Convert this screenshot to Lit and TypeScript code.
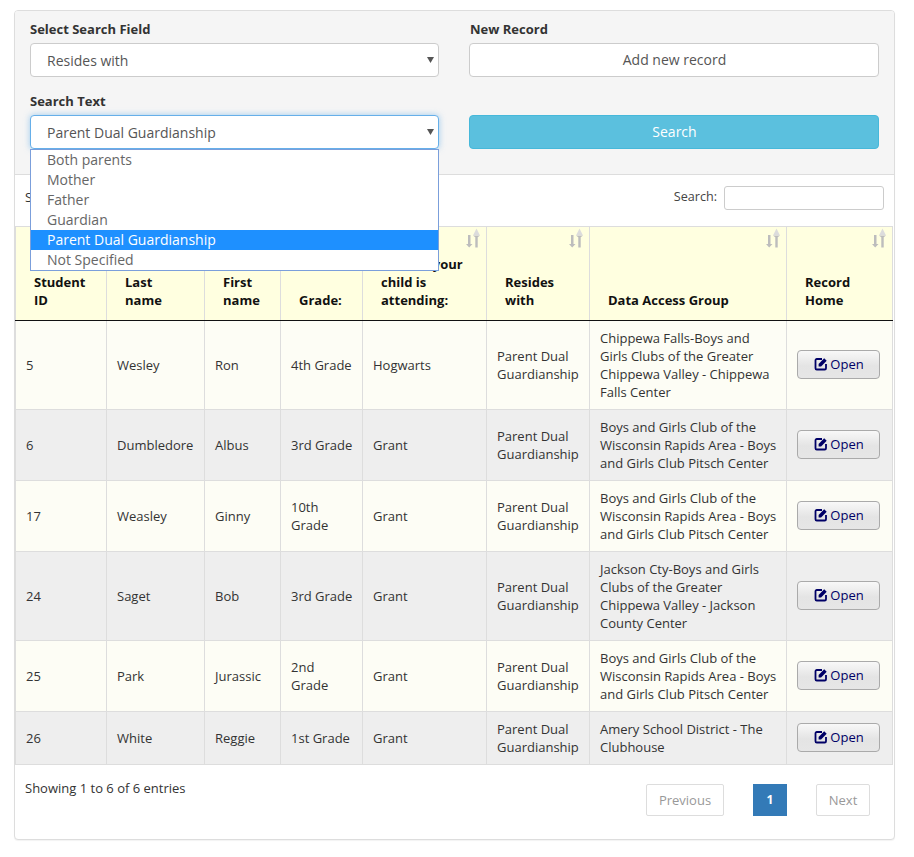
import { LitElement, html, css, svg } from "lit";
import { customElement } from "lit/decorators.js";

const PDG = "Parent Dual\nGuardianship";
const BG = "Boys and Girls Club of the\nWisconsin Rapids Area - Boys\nand Girls Club Pitsch Center";
const rows = [
  ["5", "Wesley", "Ron", "4th Grade", "Hogwarts", PDG, "Chippewa Falls-Boys and\nGirls Clubs of the Greater\nChippewa Valley - Chippewa\nFalls Center"],
  ["6", "Dumbledore", "Albus", "3rd Grade", "Grant", PDG, BG],
  ["17", "Weasley", "Ginny", "10th\nGrade", "Grant", PDG, BG],
  ["24", "Saget", "Bob", "3rd Grade", "Grant", PDG, "Jackson Cty-Boys and Girls\nClubs of the Greater\nChippewa Valley - Jackson\nCounty Center"],
  ["25", "Park", "Jurassic", "2nd\nGrade", "Grant", PDG, BG],
  ["26", "White", "Reggie", "1st Grade", "Grant", PDG, "Amery School District - The\nClubhouse"],
];
const heads = [
  ["Student\nID", 91], ["Last\nname", 98], ["First\nname", 76], ["Grade:", 82],
  ["What is your\nchild is\nattending:", 124], ["Resides\nwith", 103], ["Data Access Group", 197], ["Record\nHome", 106],
] as [string, number][];
const options = ["Both parents", "Mother", "Father", "Guardian", "Parent Dual Guardianship", "Not Specified"];

const sortIcon = html`<svg class="sort" width="14" height="20" viewBox="0 0 14 20">
  <path d="M2 7h2.500v9H6.500L3.200 19.500 0 16h2z" fill="#bdbdbd"/>
  <path d="M7 7.500h7l-2.300 1.700V19.500H9.300V9.200z" fill="#bdbdbd"/>
  <path d="M10.500 0.500l3.500 7H7z" fill="#dcdcdc"/>
</svg>`;
const editIcon = svg`<path d="M8 2H2.800A1.300 1.300 0 0 0 1.500 3.300v7.900a1.300 1.300 0 0 0 1.300 1.300h7.900a1.300 1.300 0 0 0 1.300-1.300V7" fill="none" stroke="#000066" stroke-width="1.800"/><path d="M4.600 9.400V6.900L10.200 1.300l2.500 2.500L7.100 9.400z" fill="#000066"/>`;
const arrow = html`<svg class="arrow" width="7" height="6" viewBox="0 0 7 6"><path d="M0 0h7L3.500 6z" fill="#555"/></svg>`;

@customElement("app-root")
export class AppRoot extends LitElement {
  static styles = css`
    :host { display: block; font-family: "Open Sans", sans-serif; font-size: 13px; color: #333; padding: 10px 19px 17px 14px; }
    .panel { border: 1px solid #ddd; border-radius: 4px; box-shadow: 0 1px 1px rgba(0,0,0,.05); background: #fff; height: 830px; box-sizing: border-box; position: relative; }
    .heading { background: #f5f5f5; border-bottom: 1px solid #ddd; height: 164px; box-sizing: border-box; padding: 8px 15px 0; display: grid; grid-template-columns: 409px 410px; column-gap: 30px; align-content: start; border-radius: 3px 3px 0 0; }
    .field { position: relative; height: 72px; }
    label { display: block; font-weight: 700; line-height: 20px; margin-bottom: 4px; color: #333; }
    label.shift { padding-left: 1px; }
    .select { height: 34px; box-sizing: border-box; border: 1px solid #ccc; border-radius: 4px; background: #fff; padding: 2px 2px 0 16px; font-size: 14px; line-height: 30px; color: #555; display: flex; justify-content: space-between; align-items: center; }
    .select.focus { border-color: #66afe9; box-shadow: 0 0 6px rgba(102,175,233,.6); }
    .arrow { margin: -2px 2px 0 0; flex: none; }
    .btn { height: 34px; box-sizing: border-box; border: 1px solid #ccc; border-radius: 4px; background: #fff; text-align: center; font-size: 14px; line-height: 31px; color: #555; padding-left: 1px; }
    .btn.info { background: #5bc0de; border-color: #46b8da; color: #fff; }
    .dropdown { position: absolute; top: 138px; left: 15px; width: 409px; height: 122px; box-sizing: border-box; border: 1px solid #7b9fdb; background: #fff; z-index: 5; font-size: 14px; color: #666; }
    .dropdown div { height: 20px; line-height: 20px; padding-left: 16px; }
    .dropdown .sel { background: #1e90ff; color: #fff; }
    .tools { height: 51px; display: flex; justify-content: space-between; align-items: flex-start; padding: 10px 10px 0 10px; box-sizing: border-box; }
    .tools .show { line-height: 24px; }
    .filter { display: flex; align-items: center; gap: 7px; line-height: 24px; font-size: 12.600px; color: #444; }
    .filter span { margin-bottom: 2px; }
    .filter input { width: 160px; height: 24px; box-sizing: border-box; border: 1px solid #ccc; border-radius: 3px; background: #fff; padding: 0; }
    table { border-collapse: collapse; table-layout: fixed; width: 877px; color: #333; font-size: 13px; line-height: 18px; }
    th { background: #ffffe0; border: 1px solid #ddd; border-bottom: 1px solid #111; height: 94px; box-sizing: border-box; padding: 0 0 11px 18px; vertical-align: bottom; text-align: left; font-weight: 700; color: #111; position: relative; white-space: pre; }
    th .sort { position: absolute; top: 1px; right: 6px; }
    td { border: 1px solid #ddd; padding: 8px 0 8px 10px; vertical-align: middle; color: #333; white-space: pre; }
    tr.odd td { background: #fdfdf5; }
    tr.even td { background: #eee; }
    td.open { padding: 0 0 0 10px; }
    .open-btn { display: flex; align-items: center; justify-content: center; gap: 2px; width: 83px; height: 29px; margin-bottom: 2px; box-sizing: border-box; border: 1px solid #aaa; border-radius: 4px; background: linear-gradient(#f8f8f8, #e4e4e4 55%, #e6e6e6); color: #000066; font-size: 13px; line-height: 18px; }
    .open-btn svg { margin-left: 1px; }
    .footer { display: flex; justify-content: space-between; padding: 14px 10px 0; }
    .info-text { line-height: 18px; color: #333; }
    .pager { display: flex; gap: 29px; margin: 5px 14px 0 0; }
    .pager span { height: 32px; box-sizing: border-box; border: 1px solid #ddd; line-height: 30px; color: #999; border-radius: 2px; text-align: center; }
    .pager .prev { width: 78px; }
    .pager .cur { width: 34px; background: #337ab7; border-color: #337ab7; color: #fff; font-weight: 700; border-radius: 0; font-size: 12px; }
    .pager .next { width: 54px; }
  `;

  render() {
    return html`<div class="panel">
      <div class="heading">
        <div class="field"><label>Select Search Field</label><div class="select">Resides with${arrow}</div></div>
        <div class="field"><label class="shift">New Record</label><div class="btn">Add new record</div></div>
        <div class="field"><label>Search Text</label><div class="select focus">Parent Dual Guardianship${arrow}</div></div>
        <div class="field"><label>&nbsp;</label><div class="btn info">Search</div></div>
      </div>
      <div class="dropdown">${options.map((o, i) => html`<div class=${i === 4 ? "sel" : ""}>${o}</div>`)}</div>
      <div class="tools"><div class="show">Show</div><div class="filter"><span>Search:</span><input /></div></div>
      <table>
        <colgroup>${heads.map((h) => html`<col style="width:${h[1]}px" />`)}</colgroup>
        <thead><tr>${heads.map((h) => html`<th>${sortIcon}${h[0]}</th>`)}</tr></thead>
        <tbody>${rows.map((r, i) => html`<tr class=${i % 2 ? "even" : "odd"}>
          ${r.map((c) => html`<td>${c}</td>`)}
          <td class="open"><div class="open-btn"><svg width="14" height="14" viewBox="0 0 14 14">${editIcon}</svg>Open</div></td>
        </tr>`)}</tbody>
      </table>
      <div class="footer">
        <div class="info-text">Showing 1 to 6 of 6 entries</div>
        <div class="pager"><span class="prev">Previous</span><span class="cur">1</span><span class="next">Next</span></div>
      </div>
    </div>`;
  }
}
